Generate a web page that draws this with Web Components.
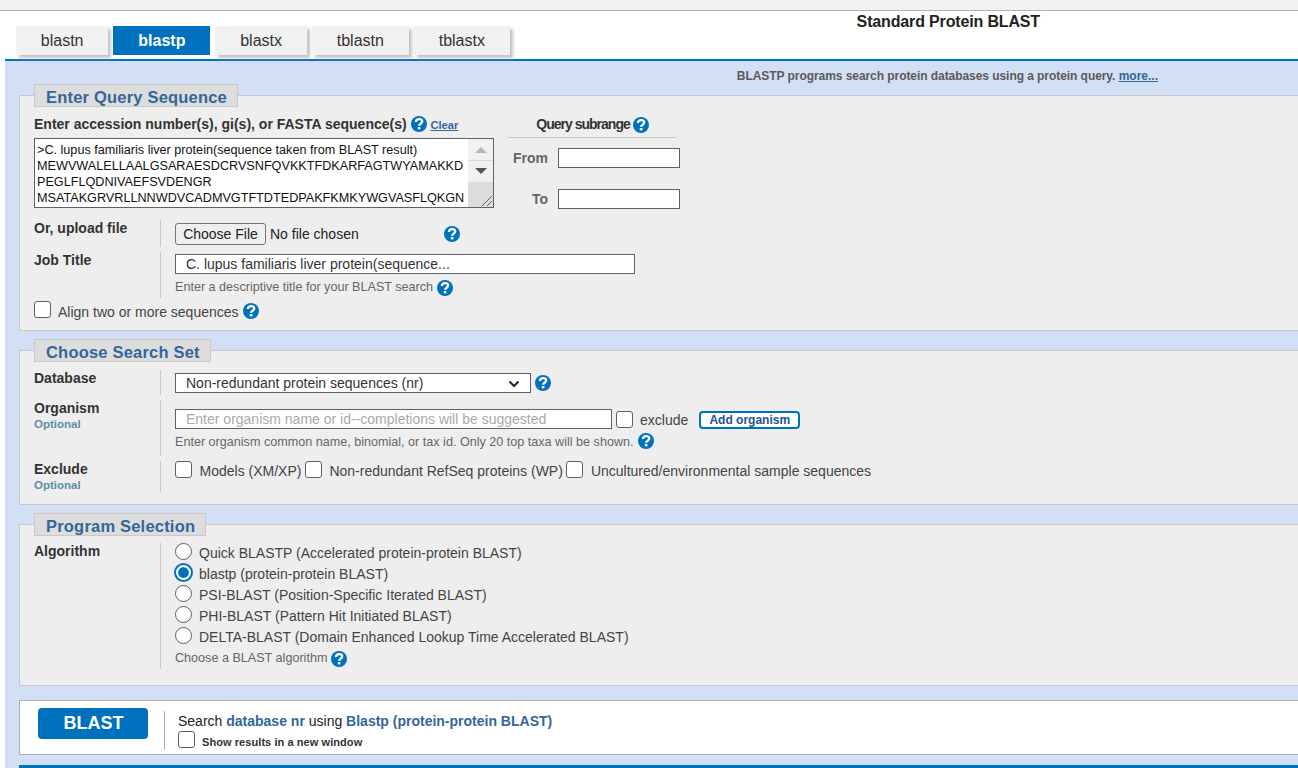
<!DOCTYPE html>
<html>
  <head>
    <meta charset="utf-8" />
    <title>Protein BLAST</title>
    <style>
      html, body { margin: 0; height: 768px; overflow: hidden; background: #fff; }
      body { font-family: "Liberation Sans", Arial, sans-serif; font-size: 14px; color: #333; }
    </style>
  </head>
  <body>
    <blast-page>
      <blast-header slot="header" title="Standard Protein BLAST">
        <blast-tab>blastn</blast-tab>
        <blast-tab active>blastp</blast-tab>
        <blast-tab>blastx</blast-tab>
        <blast-tab>tblastn</blast-tab>
        <blast-tab>tblastx</blast-tab>
      </blast-header>

      <query-section></query-section>
      <search-set-section></search-set-section>
      <program-section></program-section>
      <blast-bar></blast-bar>
    </blast-page>

    <script>
      const shared = `
        .label { font-weight: bold; font-size: 14px; color: #333; }
        .hint { font-size: 12.6px; color: #666; }
        a { color: #336699; }
      `;

      function define(name, html) {
        customElements.define(name, class extends HTMLElement {
          constructor() {
            super();
            this._shadowRoot = this.attachShadow({ mode: "open" });
          }
          connectedCallback() {
            this._shadowRoot.innerHTML = typeof html === "function" ? html(this) : html;
          }
        });
      }

      define("blast-page", `
        <style>
          :host { display: block; }
          .top { height: 10px; background: #f1f1f1; border-bottom: 1px solid #b4b4b4; }
          main { margin-left: 5px; background: #d3dff5; border-top: 2px solid #0071bc; height: 707px; overflow: hidden; }
          .intro { text-align: right; padding: 8px 140px 0 0; height: 15px; line-height: 15px; font-size: 12px; font-weight: bold; color: #5a5a5a; letter-spacing: -.06px; }
          .intro a { color: #336699; letter-spacing: 0; }
          .foot { height: 4px; margin: 10px 0 0 14px; background: #0071bc; }
        </style>
        <div class="top"></div>
        <slot name="header"></slot>
        <main>
          <div class="intro">BLASTP programs search protein databases using a protein query. <a href="#">more...</a></div>
          <slot></slot>
          <div class="foot"></div>
        </main>
      `);

      define("blast-header", (el) => `
        <style>
          :host { display: flex; height: 48px; position: relative; }
          .tabs { display: flex; gap: 5.2px; padding: 15px 0 0 16px; }
          h1 { margin: 3px 258px 0 auto; font-size: 16px; line-height: 16px; font-weight: bold; color: #222; letter-spacing: -.15px; }
        </style>
        <div class="tabs"><slot></slot></div>
        <h1>${el.getAttribute("title")}</h1>
      `);

      define("blast-tab", `
        <style>
          :host { display: block; height: 29px; }
          div {
            box-sizing: border-box; height: 29px; line-height: 29px; padding: 0 24.8px;
            font-size: 16px; color: #333; background: #f1f1f1;
            box-shadow: 3px 3px 3px #c4c4c4;
          }
          :host([active]) div { background: #0071bc; color: #fff; font-weight: bold; box-shadow: none; }
        </style>
        <div><slot></slot></div>
      `);

      define("help-icon", `
        <style>
          :host { display: inline-block; width: 16px; height: 16px; vertical-align: middle; }
          svg { display: block; }
        </style>
        <svg width="16" height="16" viewBox="0 0 16 16">
          <circle cx="8" cy="8" r="8" fill="#0071bc" />
          <path d="M4.9 6c0-1.7 1.3-2.9 3.2-2.9s3.1 1 3.1 2.5c0 2.1-3.1 2.2-3.1 4.2" fill="none" stroke="#fff" stroke-width="2.3" />
          <rect x="6.8" y="11" width="2.6" height="2.4" fill="#fff" />
        </svg>
      `);

      define("check-box", `
        <style>
          :host { display: inline-block; flex: none; width: 17px; height: 17px; box-sizing: border-box; border: 1px solid #5b616b; border-radius: 3px; background: #fff; }
        </style>
      `);

      define("radio-option", `
        <style>
          :host { display: flex; align-items: center; height: 21px; font-size: 14px; color: #444; }
          i { box-sizing: border-box; width: 17px; height: 17px; margin: -3px 7px 0 0; border: 1px solid #5b616b; border-radius: 50%; background: #fff; flex: none; }
          :host([checked]) i { border: 2px solid #0071bc; width: 19px; height: 19px; margin: -2px 6px 0 -1px; padding: 2px; background: #0071bc content-box; box-shadow: inset 0 0 0 2px #fff; }
        </style>
        <i></i><span><slot></slot></span>
      `);

      define("text-box", `
        <style>
          :host { display: flex; align-items: center; box-sizing: border-box; height: 20px; border: 1px solid #5b616b; background: #fff; padding: 0 10px; font-size: 14px; color: #333; white-space: nowrap; overflow: hidden; }
          :host([placeholder]) { color: #a9a9a9; }
          :host([size="small"]) { width: 122px; }
        </style>
        <slot></slot>
      `);

      define("form-section", (el) => `
        <style>
          :host { display: block; margin: 0 0 8px 14px; }
          fieldset { margin: 0; padding: 0 0 0 14px; border: 1px solid #c9c9c9; border-right: none; background: #eee; min-width: 0; }
          legend { box-sizing: border-box; height: 23px; margin-left: 0; padding: 0 10px 0 11px; line-height: 25px; background: #ddd; border: 1px solid #c9c9c9; font-size: 16.5px; font-weight: bold; color: #336699; letter-spacing: .2px; white-space: nowrap; }
        </style>
        <fieldset>
          <legend>${el.getAttribute("heading")}</legend>
          <slot></slot>
        </fieldset>
      `);

      define("form-row", (el) => `
        <style>
          :host { display: grid; grid-template-columns: 126px 1fr; font-size: 14px; }
          .name { font-weight: bold; color: #333; line-height: 16px; padding-top: 0; }
          .name small { display: block; font-size: 11.5px; color: #5b8fa8; line-height: 14px; margin-top: 1px; }
          .body { border-left: 1px solid #c9c9c9; padding-left: 14px; }
        </style>
        <div class="name">${el.getAttribute("label")}${el.hasAttribute("optional") ? "<small>Optional</small>" : ""}</div>
        <div class="body"><slot></slot></div>
      `);

      define("query-section", `
        <style>
          ${shared}
          :host { display: block; }
          .top { display: flex; height: 102px; }
          .seq { width: 474px; padding-top: 7px; }
          .seq .label { display: block; height: 24px; line-height: 20px; white-space: nowrap; }
          .seq a { font-size: 11.2px; font-weight: bold; }
          .seq help-icon { margin: -3px 0 0 0; }
          .area { display: flex; box-sizing: border-box; width: 460px; height: 70px; border: 1px solid #5b616b; background: #fff; }
          .text { flex: 1; padding: 3px 0 0 2px; font-size: 12.65px; line-height: 16px; color: #111; white-space: nowrap; overflow: hidden; }
          .bar { width: 25px; flex: none; background: #f1f1f1; display: flex; flex-direction: column; align-items: center; }
          .bar b { display: block; width: 0; height: 0; border-left: 6px solid transparent; border-right: 6px solid transparent; }
          .up { border-bottom: 6px solid #b6b6b6; margin-top: 8px; }
          .rule { width: 100%; height: 1px; background: #d8d8d8; margin-top: 7px; }
          .down { border-top: 6px solid #555; margin-top: 7px; }
          .thumb { margin-top: auto; width: 100%; height: 25px; background: #dcdcdc; position: relative; }
          .thumb svg { position: absolute; right: 0; bottom: 0; }
          .range { width: 172px; padding-top: 7px; }
          .range .head { height: 34px; line-height: 20px; text-align: center; box-sizing: border-box; font-size: 14px; font-weight: bold; letter-spacing: -1px; color: #333; margin-right: 4px; padding-left: 1px; }
          .range .head::after { content: ""; display: block; height: 1px; background: #c9c9c9; margin-top: 3px; margin-left: -1px; }
          .range .line { display: flex; align-items: center; justify-content: flex-end; gap: 10px; font-weight: bold; color: #666; font-size: 14px; }
          .range .line + .line { margin-top: 21px; }
          .rows { margin-top: 11px; }
          form-row { margin-bottom: 5px; }
          .upload { height: 27px; display: flex; align-items: center; color: #222; font-size: 14px; }
          .btn { box-sizing: border-box; height: 22px; width: 91px; margin-right: 4px; line-height: 20px; text-align: center; background: #efefef; border: 1px solid #767676; border-radius: 3px; }
          .upload help-icon { margin-left: 85px; }
          .job { height: 46px; padding-top: 2px; box-sizing: border-box; }
          .job text-box { width: 460px; }
          .job .hint { margin-top: 6px; white-space: nowrap; }
          .align { display: flex; align-items: center; gap: 7px; height: 18px; margin: -3px 0 12px 0; font-size: 14px; color: #444; }
          .align span { margin-top: 5px; }
        </style>
        <form-section heading="Enter Query Sequence">
          <div class="top">
            <div class="seq">
              <span class="label">Enter accession number(s), gi(s), or FASTA sequence(s) <help-icon></help-icon> <a href="#">Clear</a></span>
              <div class="area">
                <div class="text">&gt;C. lupus familiaris liver protein(sequence taken from BLAST result)<br />MEWVWALELLAALGSARAESDCRVSNFQVKKTFDKARFAGTWYAMAKKD<br />PEGLFLQDNIVAEFSVDENGR<br />MSATAKGRVRLLNNWDVCADMVGTFTDTEDPAKFKMKYWGVASFLQKGN</div>
                <div class="bar"><b class="up"></b><span class="rule"></span><b class="down"></b><span class="thumb"><svg width="13" height="13" viewBox="0 0 13 13"><path d="M2 12 12 2M7 12l5-5" stroke="#666" stroke-width="1" fill="none" /></svg></span></div>
              </div>
            </div>
            <div class="range">
              <div class="head">Query subrange <help-icon></help-icon></div>
              <div class="line">From <text-box size="small"></text-box></div>
              <div class="line">To <text-box size="small"></text-box></div>
            </div>
          </div>
          <div class="rows">
            <form-row label="Or, upload file"><div class="upload"><span class="btn">Choose File</span>No file chosen<help-icon></help-icon></div></form-row>
            <form-row label="Job Title"><div class="job"><text-box>C. lupus familiaris liver protein(sequence...</text-box><div class="hint">Enter a descriptive title for your BLAST search <help-icon></help-icon></div></div></form-row>
          </div>
          <div class="align"><check-box></check-box><span>Align two or more sequences</span><help-icon style="margin:3px 0 0 -3px"></help-icon></div>
        </form-section>
      `);

      define("search-set-section", `
        <style>
          ${shared}
          :host { display: block; }
          .rows { padding-top: 8px; height: 142px; box-sizing: border-box; }
          form-row { margin-bottom: 5px; }
          .db { height: 25px; display: flex; align-items: flex-start; gap: 4px; padding-top: 3px; box-sizing: border-box; }
          .sel { position: relative; width: 356px; }
          .sel svg { position: absolute; right: 11px; top: 7px; }
          .db help-icon { margin-top: 2px; }
          .org { height: 56px; padding-top: 10px; box-sizing: border-box; }
          .org .line { display: flex; align-items: center; height: 18px; font-size: 14px; color: #444; }
          .org text-box { width: 437px; margin-right: 4px; }
          .org .ex { margin: 0 11px 0 7px; padding-top: 2px; }
          .add { box-sizing: border-box; height: 18px; width: 101px; margin-top: 2px; line-height: 14px; text-align: center; border: 2px solid #0071bc; border-radius: 4px; background: #fff; color: #205493; font-size: 12px; font-weight: bold; }
          .org .hint { margin-top: 7px; white-space: nowrap; }
          .org .hint help-icon { margin: -3px 0 0 1px; }
          .exc { height: 21px; display: flex; align-items: flex-start; font-size: 14px; color: #444; white-space: nowrap; }
          .exc span { margin: 2px 3.5px 0 7.5px; }
        </style>
        <form-section heading="Choose Search Set">
          <div class="rows">
            <form-row label="Database"><div class="db"><div class="sel"><text-box>Non-redundant protein sequences (nr)</text-box><svg width="12" height="8" viewBox="0 0 12 8"><path d="M1.5 1.5 6 6l4.5-4.5" fill="none" stroke="#222" stroke-width="2" /></svg></div><help-icon></help-icon></div></form-row>
            <form-row label="Organism" optional><div class="org"><div class="line"><text-box placeholder>Enter organism name or id--completions will be suggested</text-box><check-box></check-box><span class="ex">exclude</span><span class="add">Add organism</span></div><div class="hint">Enter organism common name, binomial, or tax id. Only 20 top taxa will be shown. <help-icon></help-icon></div></div></form-row>
            <form-row label="Exclude" optional><div class="exc"><check-box></check-box><span>Models (XM/XP)</span><check-box></check-box><span>Non-redundant RefSeq proteins (WP)</span><check-box></check-box><span>Uncultured/environmental sample sequences</span></div></form-row>
          </div>
        </form-section>
      `);

      define("program-section", `
        <style>
          ${shared}
          :host { display: block; }
          .rows { padding-top: 7px; height: 149px; box-sizing: border-box; }
          radio-option:first-of-type { margin-top: -1px; }
          .hint { margin-top: 1px; height: 21px; line-height: 21px; }
        </style>
        <form-section heading="Program Selection">
          <div class="rows">
            <form-row label="Algorithm">
              <radio-option>Quick BLASTP (Accelerated protein-protein BLAST)</radio-option>
              <radio-option checked>blastp (protein-protein BLAST)</radio-option>
              <radio-option>PSI-BLAST (Position-Specific Iterated BLAST)</radio-option>
              <radio-option>PHI-BLAST (Pattern Hit Initiated BLAST)</radio-option>
              <radio-option>DELTA-BLAST (Domain Enhanced Lookup Time Accelerated BLAST)</radio-option>
              <div class="hint">Choose a BLAST algorithm <help-icon></help-icon></div>
            </form-row>
          </div>
        </form-section>
      `);

      define("blast-bar", `
        <style>
          :host { display: flex; box-sizing: border-box; height: 55px; margin: 14px 0 0 14px; padding: 7px 0 0 18px; background: #fff; border: 1px solid #aeb0b5; border-right: none; }
          .go { box-sizing: border-box; width: 110px; height: 31px; line-height: 31px; padding-left: 1px; text-align: center; background: #0071bc; color: #fff; border-radius: 4px; font-size: 18px; font-weight: bold; margin-right: 16px; }
          .info { border-left: 1px solid #aeb0b5; height: 39px; margin-top: 3px; padding-left: 13px; font-size: 14px; color: #222; }
          .info b { color: #336699; }
          .s { height: 20px; line-height: 20px; }
          .n { display: flex; align-items: center; gap: 7px; font-size: 11px; font-weight: bold; color: #333; letter-spacing: .07px; }
          .n span { margin-top: 4px; }
        </style>
        <div class="go">BLAST</div>
        <div class="info">
          <div class="s">Search <b>database nr</b> using <b>Blastp (protein-protein BLAST)</b></div>
          <div class="n"><check-box></check-box><span>Show results in a new window</span></div>
        </div>
      `);
    </script>
  </body>
</html>
